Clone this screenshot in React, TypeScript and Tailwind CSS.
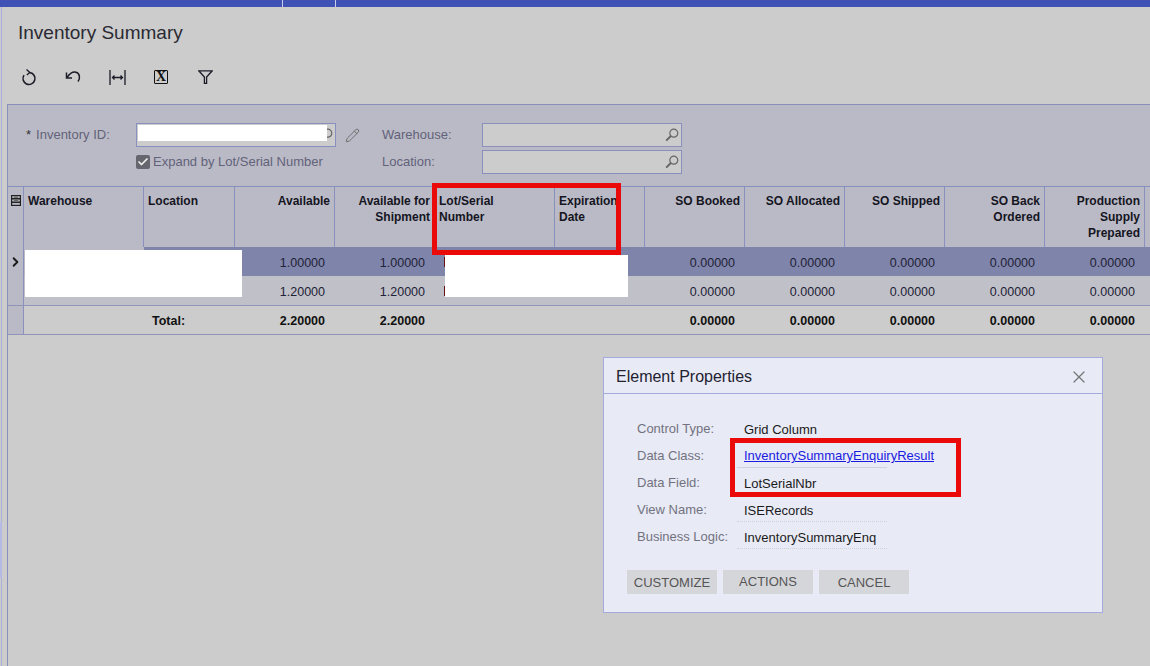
import { Check, ChevronRight, Pencil, X } from 'lucide-react';

const gridCols =
  'grid grid-cols-[16px_120px_91px_100px_100px_120px_90px_100px_100px_100px_100px_100px_5px]';

const headers = [
  { label: 'Warehouse', left: true },
  { label: 'Location', left: true },
  { label: 'Available' },
  { label: 'Available for Shipment', w: 'w-[92px]' },
  { label: 'Lot/Serial Number', left: true, w: 'w-[80px]' },
  { label: 'Expiration Date', left: true, w: 'w-[70px]' },
  { label: 'SO Booked' },
  { label: 'SO Allocated' },
  { label: 'SO Shipped' },
  { label: 'SO Back Ordered', w: 'w-[70px]' },
  { label: 'Production Supply Prepared', w: 'w-[70px]' },
];

const soCols = ['0.00000', '0.00000', '0.00000', '0.00000', '0.00000'];

function NumCell({ value, bold }: { value: string; bold?: boolean }) {
  return <div className={`pr-[10px] pt-[3px] text-right text-[12.5px] ${bold ? 'font-bold text-[#111]' : 'text-[#222236]'}`}>{value}</div>;
}

function DataRow({ value, rowClass, whClass, active }: { value: string; rowClass: string; whClass: string; active?: boolean }) {
  return (
    <div className={`${gridCols} h-[29px] items-center`}>
      <div className="flex h-full items-center justify-center border-r border-[#8a90bd] bg-[#babac6]">
        {active && <ChevronRight size={20} strokeWidth={3} className="text-[#1a1a1a]" />}
      </div>
      <div className={`h-full ${whClass}`} />
      <div className={`col-span-11 grid h-full grid-cols-[91px_100px_100px_120px_90px_100px_100px_100px_100px_100px_5px] items-center ${rowClass}`}>
        <div />
        <NumCell value={value} />
        <NumCell value={value} />
        <div className="pl-[9px]">
          <div className="h-[10px] w-px bg-[#6a1010]" />
        </div>
        <div />
        {soCols.map((v, i) => (
          <NumCell key={i} value={v} />
        ))}
        <div />
      </div>
    </div>
  );
}

function Lookup() {
  return (
    <div className="flex h-[24px] w-[200px] items-center justify-end border border-[#8a90bd] bg-[#cccccc] pr-[2px]">
      <svg width="14" height="14" viewBox="0 0 14 14" fill="none" stroke="#666" strokeWidth="1.200">
        <circle cx="8.800" cy="5.200" r="4" />
        <path d="M5.800 8 1.200 12.600" strokeWidth="1.900" />
      </svg>
    </div>
  );
}

function ToolIcon({ children }: { children: React.ReactNode }) {
  return <button className="flex h-[24px] w-[44px] items-center justify-center text-[#1c1c28]">{children}</button>;
}

const props = [
  { label: 'Control Type:', value: 'Grid Column' },
  { label: 'Data Class:', value: 'InventorySummaryEnquiryResult', link: true, line: 'h-[25px] self-start pt-[2px] border-b border-[#cfd0da]' },
  { label: 'Data Field:', value: 'LotSerialNbr' },
  { label: 'View Name:', value: 'ISERecords', line: 'h-[25px] self-start pt-[4px] border-b border-dotted border-[#cfd0da]' },
  { label: 'Business Logic:', value: 'InventorySummaryEnq', line: 'h-[25px] self-start pt-[4px] border-b border-dotted border-[#cfd0da]' },
];

export default function App() {
  return (
    <div className="relative h-[666px] w-[1150px] overflow-hidden bg-[#cccccc] [font-family:Liberation_Sans,Arimo,Arial,sans-serif] text-[13px]">
      {/* top bar */}
      <div className="flex h-[7px] bg-[#3f51b5]">
        <div className="w-[283px] border-r border-[#c9cde8]" />
        <div className="w-[53px] border-r border-[#c9cde8]" />
      </div>

      <div className="ml-px h-[659px] border-l border-[#a9aedb]">
        <h1 className="flex h-[52px] items-center pl-[16px] text-[19px] font-normal text-[#2a2a33]">Inventory Summary</h1>

        {/* toolbar */}
        <div className="flex h-[45px] items-start pl-[5px] pt-[6px]">
          <ToolIcon>
            <svg width="16" height="18" viewBox="0 0 16 18" fill="none" stroke="currentColor" strokeWidth="1.600">
              <path d="M8.500 4.500a6 6 0 1 1-5.500 2.600" />
              <path d="M5.500 1.500 8.800 4.500 5.800 7" strokeWidth="1.300" />
            </svg>
          </ToolIcon>
          <ToolIcon>
            <svg width="17" height="14" viewBox="0 0 17 14" fill="none" stroke="currentColor" strokeWidth="1.500">
              <path d="M2 7.500C5 3 8 1.500 11 2.200c3.800 1 4.500 6 2 9.300" />
              <path d="M1.500 2.500v5.500H7" />
            </svg>
          </ToolIcon>
          <ToolIcon>
            <svg width="17" height="15" viewBox="0 0 17 15" fill="none" stroke="currentColor" strokeWidth="1.300">
              <path d="M1 0v15M16 0v15" />
              <path d="M3.500 7.500h10M5.500 5.500l-2 2 2 2M11.500 5.500l2 2-2 2" />
            </svg>
          </ToolIcon>
          <ToolIcon>
            <span className="flex h-[14px] w-[14px] items-center justify-center rounded-[1px] border-[1.5px] border-[#111] [font-family:Liberation_Serif,serif] text-[14px] font-bold leading-none text-[#111]">
              X
            </span>
          </ToolIcon>
          <ToolIcon>
            <svg width="15" height="14" viewBox="0 0 15 14" fill="none" stroke="currentColor" strokeWidth="1.300">
              <path d="M.8.800h13.400L8.600 7v6.400H6.400V7z" />
            </svg>
          </ToolIcon>
        </div>

        <div className="ml-[5px] h-[562px] border-l border-t border-[#8a90bd]">
          {/* filters */}
          <div className="grid h-[81px] grid-cols-[128px_200px_46px_100px_200px] grid-rows-[24px_24px] items-center gap-y-[3px] bg-[#babac6] pt-[18px] text-[#62627a]">
            <div className="pl-[18px]">
              <span className="mr-[5px] text-[#333]">*</span>Inventory ID:
            </div>
            <Lookup />
            <div className="pl-[9px]">
              <Pencil size={15} strokeWidth={1.300} className="text-[#5f5f5f]" />
            </div>
            <div>Warehouse:</div>
            <Lookup />
            <div />
            <label className="flex items-center gap-[3px] whitespace-nowrap">
              <span className="flex h-[14px] w-[14px] items-center justify-center rounded-[2px] bg-[#66666e]">
                <Check size={12} strokeWidth={3.500} className="text-[#f0f0f0]" />
              </span>
              Expand by Lot/Serial Number
            </label>
            <div />
            <div>Location:</div>
            <Lookup />
          </div>

          {/* grid header */}
          <div className={`${gridCols} h-[61px] border-t border-[#8a90bd] bg-[#babac6] text-[12px] font-bold leading-[16px] text-[#15151f]`}>
            <div className="flex justify-center border-r border-[#8a90bd] pt-[8px]">
              <svg width="10" height="11" viewBox="0 0 10 11" fill="none" stroke="#222" strokeWidth="1.200">
                <rect x=".6" y=".6" width="8.800" height="9.800" />
                <path d="M.6 3.800h8.800M.6 7.200h8.800" strokeWidth="1.400" />
                <path d="M2.800 2.200h4.400M2.800 5.500h4.400" stroke="#666" />
              </svg>
            </div>
            {headers.map((h) => (
              <div
                key={h.label}
                className={`flex border-r border-[#8a90bd] pt-[6px] ${h.left ? 'justify-start pl-1' : 'justify-end pr-1 text-right'}`}
              >
                <div className={h.w}>{h.label}</div>
              </div>
            ))}
            <div />
          </div>

          <DataRow value="1.00000" rowClass="bg-[#7f84ab]" whClass="bg-[#babac6]" active />
          <DataRow value="1.20000" rowClass="bg-[#c0c0c8]" whClass="bg-[#c0c0c8]" />

          {/* total row */}
          <div className={`${gridCols} h-[30px] items-center border-y border-[#8f94b8]`}>
            <div className="h-full border-r border-[#8a90bd] bg-[#babac6]" />
            <div />
            <div className="pl-[8px] pt-[3px] text-[12.5px] font-bold text-[#111]">Total:</div>
            <NumCell value="2.20000" bold />
            <NumCell value="2.20000" bold />
            <div />
            <div />
            {soCols.map((v, i) => (
              <NumCell key={i} value={v} bold />
            ))}
            <div />
          </div>
        </div>
      </div>

      {/* edge handle */}
      <div className="absolute left-0 top-[522px] h-[56px] w-[2px] bg-[#b4b9e6]" />

      {/* redactions and annotations */}
      <div className="absolute left-[138px] top-[125px] h-[16px] w-[189px] bg-white" />
      <div className="absolute left-[25px] top-[250px] h-[47px] w-[217px] bg-white" />
      <div className="absolute left-[445px] top-[255px] h-[42px] w-[183px] bg-white" />
      <div className="absolute left-[432px] top-[183px] h-[72px] w-[189px] border-[5px] border-[#ea0a0a]" />

      {/* element properties dialog */}
      <div className="absolute left-[603px] top-[357px] h-[256px] w-[500px] border border-[#a4abdc] bg-[#e8eaf6]">
        <div className="flex h-[36px] items-center justify-between border-b border-[#a4abdc] pl-[12px] pr-[13px] pt-[2px]">
          <span className="text-[16px] text-[#222230]">Element Properties</span>
          <X size={20} strokeWidth={1.500} className="text-[#777]" />
        </div>
        <div className="pl-[33px] pt-[22px]">
          {props.map((p) => (
            <div key={p.label} className="flex h-[27px] items-center">
              <div className="w-[100px] pb-[2px] text-[#72727e]">{p.label}</div>
              <div className={`flex w-[150px] items-center whitespace-nowrap pl-[7px] text-[#1a1a1a] ${p.line ?? 'h-full'}`}>
                {p.link ? <a className="text-[#1a1ae0] underline">{p.value}</a> : p.value}
              </div>
            </div>
          ))}
        </div>
        <div className="flex gap-[6px] pl-[23px] pt-[19px]">
          {['CUSTOMIZE', 'ACTIONS', 'CANCEL'].map((b) => (
            <button key={b} className={`h-[24px] w-[90px] bg-[#d5d6da] text-[#555] ${b === 'ACTIONS' ? '' : 'pt-[2px]'}`}>
              {b}
            </button>
          ))}
        </div>
      </div>
      <div className="absolute left-[730px] top-[438px] h-[59px] w-[231px] border-[5px] border-[#ea0a0a]" />
    </div>
  );
}
